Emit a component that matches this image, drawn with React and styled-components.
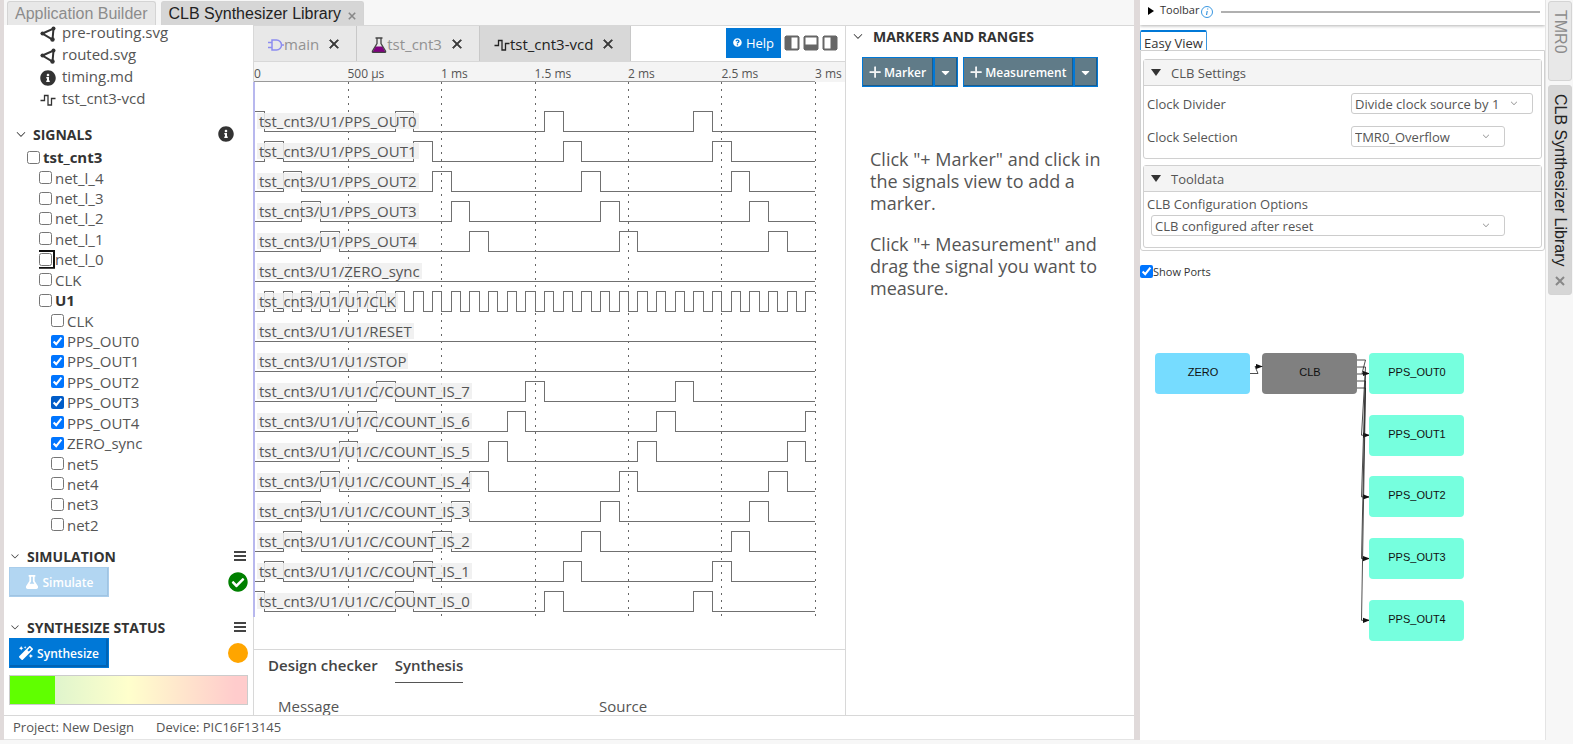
import { useState } from "react";
import styled, { createGlobalStyle, css } from "styled-components";
import {
  FaCaretDown,
  FaCheckCircle,
  FaFlask,
  FaInfoCircle,
  FaMagic,
  FaQuestionCircle,
} from "react-icons/fa";
import {
  VscAdd,
  VscChevronDown,
  VscClose,
  VscLayoutPanel,
  VscLayoutSidebarLeft,
  VscLayoutSidebarRight,
} from "react-icons/vsc";

const GlobalStyle = createGlobalStyle`
  * {
    box-sizing: border-box;
  }
  body {
    margin: 0;
    background: #f7f7f7;
    color: #555;
    font-family: "Open Sans", "Noto Sans", sans-serif;
    font-size: 15px;
  }
  button, select, input {
    font-family: inherit;
    margin: 0;
  }
  h2, p, ul {
    margin: 0;
    padding: 0;
  }
`;

const Page = styled.div`
  display: flex;
  height: 100vh;
  padding-bottom: 4px;
  overflow: hidden;
`;
const Workbench = styled.div`
  display: flex;
  flex-direction: column;
  flex: 1;
  min-width: 0;
  border-left: 4px solid #e0dada;
  border-right: 6px solid #e0dada;
`;
const TopTabs = styled.nav`
  display: flex;
  gap: 5px;
  height: 25px;
  padding: 1px 3px 0;
`;
const TopTab = styled.button`
  display: flex;
  align-items: center;
  gap: 7px;
  padding: 0 7px;
  border: 1px solid #d4d4d4;
  border-bottom: 0;
  border-radius: 3px 3px 0 0;
  background: ${({ $active }) => ($active ? "#d6d6d6" : "#e8e8e8")};
  color: ${({ $active }) => ($active ? "#222" : "#8c8c8c")};
  font-family: "Liberation Sans", Arial, sans-serif;
  font-size: 16px;
  white-space: nowrap;
`;
const TabCross = styled.svg`
  width: ${({ $size }) => $size}px;
  height: ${({ $size }) => $size}px;
  margin-top: ${({ $size }) => ($size === 8 ? 5 : 0)}px;
  stroke: #888;
  stroke-width: 2px;
`;
const Panes = styled.main`
  display: flex;
  flex: 1;
  min-height: 0;
  background: #fff;
`;

/* left pane */
const Sidebar = styled.aside`
  display: flex;
  flex-direction: column;
  width: 250px;
  padding: 0 5px 10px;
  border-right: 1px solid #d8d8d8;
`;
const FileList = styled.ul`
  padding-left: 31px;
  list-style: none;
  margin-top: -4px;
`;
const FileRow = styled.li`
  display: flex;
  align-items: center;
  gap: 6px;
  height: 22px;
  svg {
    width: 16px;
    height: 16px;
    margin-top: 3px;
    color: #333;
  }
`;
const SectionHead = styled.div`
  display: flex;
  align-items: center;
  gap: 6px;
  height: 22px;
  color: #333;
`;
const SignalsHead = styled(SectionHead)`
  gap: 5px;
  margin: 14px 14px 0 5px;
`;
const SectionTitle = styled.h2`
  flex: 1;
  font-size: 14px;
  font-weight: 700;
`;
const Tree = styled.div`
  display: flex;
  flex: 1;
  flex-direction: column;
  margin: 2px 0 10px 16px;
`;
const TreeRow = styled.label`
  display: flex;
  flex: 1;
  align-items: center;
  gap: 3px;
  padding-left: ${({ $depth }) => $depth * 12 + 2}px;
  line-height: 20px;
  font-weight: ${({ $bold }) => ($bold ? 700 : 400)};
  color: ${({ $bold }) => ($bold ? "#333" : "#555")};
`;
const Check = styled.input`
  width: 13px;
  height: 13px;
  accent-color: ${({ $dark }) => ($dark ? "#005cc8" : "#0075ff")};
  ${({ $ring }) =>
    $ring &&
    css`
      border-radius: 3px;
      box-shadow: 0 0 0 1px #fff, 0 0 0 3px #101010;
      clip-path: inset(-3px -3px -3px 0);
    `}
`;
const StatusRow = styled.div`
  display: flex;
  align-items: center;
  justify-content: space-between;
  margin-bottom: ${({ $last }) => ($last ? 7 : 19)}px;
`;
const ActionButton = styled.button`
  display: flex;
  align-items: center;
  justify-content: center;
  gap: 4px;
  height: 30px;
  border: 1px solid #0078d7;
  background: #0078d7;
  color: #fff;
  font-size: 12px;
  font-weight: 600;
`;
const SideButton = styled(ActionButton)`
  width: 100px;
  box-shadow: inset -2px -2px 0 #0063b5;
  svg {
    width: 14px;
    height: 14px;
  }
  &:disabled {
    border-color: #a9cdeb;
    background: #b2d6f2;
    box-shadow: inset -1px -1px 0 #a0c4e2;
  }
`;
const StatusDot = styled.span`
  width: 20px;
  height: 20px;
  border-radius: 50%;
  background: orange;
`;
const Meter = styled.div`
  height: 30px;
  border: 1px solid #ccc;
  background: linear-gradient(90deg, #cec 0%, #ffc 50%, #fcc 95%);
`;
const MeterFill = styled.div`
  height: 100%;
  background: #60ff00;
`;

/* centre pane */
const Center = styled.section`
  display: flex;
  flex: 1;
  flex-direction: column;
  min-width: 0;
  border-right: 1px solid #d8d8d8;
`;
const EditorTabs = styled.div`
  display: flex;
  height: 37px;
  border-bottom: 1px solid #d8d8d8;
  border-top: 1px solid #d8d8d8;
`;
const EditorTab = styled.div`
  display: flex;
  align-items: center;
  padding: 0 14px;
  border-right: 1px solid #c8c8c8;
  background: ${({ $active }) => ($active ? "#d8d8d8" : "#e8e8e8")};
  color: ${({ $active }) => ($active ? "#222" : "#929292")};
  > svg {
    width: 16px;
    height: 16px;
    margin-top: 2px;
  }
`;
const PlainButton = styled.button`
  display: flex;
  padding: 0;
  border: 0;
  background: none;
  color: #666;
`;
const CloseTab = styled(PlainButton)`
  margin-left: 7px;
  color: #333;
  svg {
    width: 16px;
    height: 16px;
    stroke: #333;
    stroke-width: 1px;
  }
`;
const EditorTools = styled.div`
  display: flex;
  align-items: center;
  gap: 3px;
  margin-left: auto;
  padding: 0 7px 2px 0;
`;
const HelpButton = styled(ActionButton)`
  width: 55px;
  font-size: 13px;
  font-weight: 400;
`;
const LayoutButton = styled(PlainButton)`
  svg {
    width: 16px;
    height: 16px;
    stroke: #666;
    stroke-width: 1px;
  }
`;
const Axis = styled.div`
  height: 20px;
  padding-right: 30px;
  background: #f4f4f4;
`;
const Ticks = styled.div`
  display: grid;
  grid-template-columns: repeat(6, 1fr) 0;
  height: 20px;
  border-bottom: 1px solid #999;
  font-size: 12px;
  line-height: 24px;
  white-space: nowrap;
`;
const Plot = styled.div`
  position: relative;
  margin: 0 30px 0 -1px;
  padding: 23px 0 2px;
  border-left: 2px solid #b8b8ee;
`;
const GridLines = styled.svg`
  position: absolute;
  inset: 0;
  width: 100%;
  height: 100%;
  overflow: visible;
`;
const WaveRow = styled.div`
  position: relative;
  height: 30px;
`;
const WaveSvg = styled.svg`
  display: block;
  width: 100%;
  height: 30px;
`;
const WaveLabel = styled.span`
  position: absolute;
  left: 2px;
  top: 8px;
  padding: 0 2px;
  background: rgba(238, 238, 238, 0.85);
  line-height: 16px;
`;
const OutputArea = styled.div`
  display: flex;
  flex: 1;
  min-height: 0;
  padding-top: 32px;
`;
const Output = styled.section`
  flex: 1;
  min-height: 0;
  border-top: 1px solid #d8d8d8;
  overflow: hidden;
`;
const OutputTabs = styled.div`
  display: flex;
  gap: 17px;
  padding: 1px 14px 0;
`;
const OutputTab = styled.button`
  height: 32px;
  padding: 0 0 3px;
  border: 0;
  border-bottom: 1px solid ${({ $active }) => ($active ? "#555" : "transparent")};
  background: none;
  color: #444;
  font-size: 15px;
  font-weight: 600;
`;
const OutputTable = styled.table`
  width: 100%;
  margin-top: 12px;
  border-spacing: 0;
  table-layout: fixed;
  th {
    padding: 0 0 0 24px;
    font-weight: 400;
    line-height: 22px;
    text-align: left;
  }
  th:first-child {
    width: 321px;
  }
`;

/* markers pane */
const Markers = styled.section`
  width: 288px;
  border-top: 1px solid #d8d8d8;
`;
const MarkersHead = styled(SectionHead)`
  height: 20px;
  padding-left: 5px;
  gap: 8px;
`;
const MarkerButtons = styled.div`
  display: flex;
  gap: 5px;
  padding: 11px 16px 0;
`;
const SplitButton = styled.div`
  display: flex;
`;
const SlateButton = styled(ActionButton)`
  width: ${({ $narrow }) => ($narrow ? "24px" : "auto")};
  padding: 0 7px 0 6px;
  gap: 2px;
  background: #607b88;
  box-shadow: inset -1px -1px 0 #1d5c8c;
`;
const Hint = styled.p`
  padding: 0 16px 0 24px;
  margin: ${({ $first }) => ($first ? "61px 0 19px" : "0")};
  font-size: 18px;
  line-height: 22px;
`;
const StatusBar = styled.footer`
  display: flex;
  gap: 22px;
  height: 25px;
  padding-left: 9px;
  border-top: 1px solid #d8d8d8;
  border-bottom: 1px solid #e4e4e4;
  background: #fff;
  font-size: 13px;
  line-height: 23px;
`;

/* right pane */
const EasyPane = styled.aside`
  width: 406px;
  border-right: 1px solid #e4e4e4;
  background: #fff;
`;
const Toolbar = styled.div`
  display: flex;
  align-items: center;
  height: 25px;
  padding: 0 5px 4px 8px;
  box-shadow: 0 1px 3px rgba(0, 0, 0, 0.3);
  color: #333;
  font-size: 11px;
  clip-path: inset(0 0 -4px 0);
`;
const ToolbarName = styled.span`
  margin: 0 2px 2px 6px;
`;
const Rule = styled.hr`
  flex: 1;
  height: 2px;
  margin: 2px 0 0 8px;
  border: 0;
  background: #b0b0b0;
`;
const InfoMark = styled.svg`
  width: 12px;
  height: 12px;
  margin-top: 2px;
`;
const EasyTab = styled.button`
  display: block;
  height: 20px;
  margin-top: 5px;
  padding: 2px 3px 0;
  border: 1px solid #3a97e0;
  border-top: 2px solid #0078d7;
  border-bottom: 0;
  border-radius: 2px 2px 0 0;
  background: #fff;
  color: #333;
  font-size: 13px;
`;
const EasyBody = styled.div`
  display: flex;
  flex-direction: column;
  gap: 6px;
  padding: 8px 2px 2px;
  border: 1px solid #d0d0d0;
  border-radius: 0 0 3px 3px;
`;
const Group = styled.details`
  padding-bottom: 6px;
  border: 1px solid #d0d0d0;
  border-radius: 3px;
  font-size: 13px;
`;
const GroupHead = styled.summary`
  display: flex;
  align-items: center;
  gap: 10px;
  height: 26px;
  padding-left: 7px;
  border-bottom: 1px solid #d0d0d0;
  background: #f4f4f4;
`;
const Field = styled.div`
  display: grid;
  grid-template-columns: 204px auto;
  justify-content: start;
  align-items: center;
  height: 33px;
  padding: 2px 0 0 3px;
  ${({ $stacked }) =>
    $stacked &&
    css`
      grid-template-columns: 1fr;
      align-content: start;
      row-gap: 2px;
      height: 49px;
      padding-top: 3px;
      select {
        margin-left: 4px;
      }
    `}
`;
const SelectBox = styled.span`
  position: relative;
  display: flex;
  width: max-content;
  svg {
    position: absolute;
    top: 5px;
    right: 14px;
    color: #888;
  }
`;
const Select = styled.select`
  width: ${({ $width }) => $width}px;
  height: 21px;
  padding: 0 3px;
  border: 1px solid #ccc;
  border-radius: 3px;
  background: #fff;
  color: #555;
  font-size: 13px;
  appearance: none;
`;
const ShowPorts = styled.label`
  display: flex;
  align-items: flex-end;
  margin-top: 14px;
  color: #333;
  font-size: 11px;
  line-height: 12px;
`;
const Graph = styled.svg`
  display: block;
  margin-top: 70px;
  width: 400px;
  height: 300px;
  text {
    font-family: "Liberation Sans", Arial, sans-serif;
    font-size: 11px;
    text-anchor: middle;
    fill: #111;
  }
`;
const SideTabs = styled.nav`
  display: flex;
  flex-direction: column;
  gap: 4px;
  width: 27px;
  padding: 1px 1px 0 2px;
`;
const SideTab = styled(TopTab)`
  gap: 9px;
  height: ${({ $active }) => ($active ? 210 : 80)}px;
  padding: 8px 2px;
  border: 1px solid #d4d4d4;
  border-radius: 3px;
  writing-mode: vertical-rl;
`;

const HierarchyIcon = () => (
  <svg viewBox="0 0 16 16" fill="none" stroke="currentColor">
    <path d="M2.500 7.500 13.500 2.500 12.500 13.500z" strokeWidth="2" />
    <circle cx="2.500" cy="7.500" r="2" fill="currentColor" stroke="none" />
    <circle cx="13.500" cy="2.500" r="2" fill="currentColor" stroke="none" />
    <circle cx="12.500" cy="13.500" r="2.200" fill="currentColor" stroke="none" />
  </svg>
);
const PulseIcon = () => (
  <svg viewBox="0 0 16 16" fill="none" stroke="currentColor" strokeWidth="1.300">
    <path d="M.5 8.500H4.500V3.500H8V13H11.500V6.500H15.500" />
  </svg>
);
const GateIcon = () => (
  <svg viewBox="0 0 16 16" fill="none" stroke="#8c8cf0" strokeWidth="1.500">
    <path d="M4 3h4.500a5 5 0 0 1 0 10H4zM0 5.500h4M0 10.500h4M13 8h3" />
  </svg>
);
const FlaskIcon = () => (
  <svg viewBox="0 0 16 16">
    <path d="M4.500 9.500h7l3 5.500h-13z" fill="#800080" />
    <path
      d="M4.500 1h7M6 1v5.500L1.500 14q-.5 1.500 1 1.500h11q1.500 0 1-1.500L10 6.500V1"
      fill="none"
      stroke="#444"
      strokeWidth="1.300"
    />
  </svg>
);
const MenuIcon = () => (
  <svg width="14" height="12" stroke="#444" strokeWidth="2">
    <path d="M0 2h12M0 6h12M0 10h12" shapeRendering="crispEdges" />
  </svg>
);
const Cross = ({ size }) => (
  <TabCross viewBox="0 0 10 10" $size={size}>
    <path d="M1 1 9 9M9 1 1 9" />
  </TabCross>
);

const FILES = [
  ["pre-routing.svg", HierarchyIcon],
  ["routed.svg", HierarchyIcon],
  ["timing.md", FaInfoCircle],
  ["tst_cnt3-vcd", PulseIcon],
];

const SIGNALS = [
  { name: "tst_cnt3", depth: 0, bold: true },
  { name: "net_l_4", depth: 1 },
  { name: "net_l_3", depth: 1 },
  { name: "net_l_2", depth: 1 },
  { name: "net_l_1", depth: 1 },
  { name: "net_l_0", depth: 1, ring: true },
  { name: "CLK", depth: 1 },
  { name: "U1", depth: 1, bold: true },
  { name: "CLK", depth: 2 },
  { name: "PPS_OUT0", depth: 2, on: true },
  { name: "PPS_OUT1", depth: 2, on: true },
  { name: "PPS_OUT2", depth: 2, on: true },
  { name: "PPS_OUT3", depth: 2, on: true, dark: true },
  { name: "PPS_OUT4", depth: 2, on: true },
  { name: "ZERO_sync", depth: 2, on: true },
  { name: "net5", depth: 2 },
  { name: "net4", depth: 2 },
  { name: "net3", depth: 2 },
  { name: "net2", depth: 2 },
];

// times are in µs, the view spans 3 ms
const SPAN = 3000;
const TICKS = ["0", "500 µs", "1 ms", "1.5 ms", "2 ms", "2.5 ms", "3 ms"];

const countPulses = (k) => {
  const pulses = [];
  for (let start = k * 100 - 50; start < SPAN; start += 800) {
    pulses.push([Math.max(start, 0), Math.min(start + 100, SPAN)]);
  }
  return pulses;
};
const clockPulses = () => {
  const pulses = [];
  for (let start = 50; start < SPAN; start += 100) {
    pulses.push([start, start + 50]);
  }
  return pulses;
};

const WAVES = [
  ...[0, 1, 2, 3, 4].map((k) => [`tst_cnt3/U1/PPS_OUT${k}`, countPulses(k)]),
  ["tst_cnt3/U1/ZERO_sync", []],
  ["tst_cnt3/U1/U1/CLK", clockPulses()],
  ["tst_cnt3/U1/U1/RESET", []],
  ["tst_cnt3/U1/U1/STOP", []],
  ...[7, 6, 5, 4, 3, 2, 1, 0].map((k) => [
    `tst_cnt3/U1/U1/C/COUNT_IS_${k}`,
    countPulses(k),
  ]),
];

const wavePath = (pulses) => {
  let d = pulses.length && pulses[0][0] === 0 ? "M0 6.500" : "M0 26.500";
  pulses.forEach(([start, end]) => {
    d += start > 0 ? `H${start}V6.500H${end}` : `H${end}`;
    if (end < SPAN || pulses.length > 5) d += "V26.500";
  });
  return d.endsWith("H3000") ? d : `${d}H${SPAN}`;
};

function SignalsPane() {
  const [checked, setChecked] = useState(SIGNALS.map((s) => !!s.on));
  const toggle = (i) =>
    setChecked(checked.map((c, index) => (index === i ? !c : c)));
  return (
    <Sidebar>
      <FileList>
        {FILES.map(([name, Icon]) => (
          <FileRow key={name}>
            <Icon />
            {name}
          </FileRow>
        ))}
      </FileList>
      <SignalsHead>
        <VscChevronDown size={14} />
        <SectionTitle>SIGNALS</SectionTitle>
        <FaInfoCircle size={16} />
      </SignalsHead>
      <Tree>
        {SIGNALS.map((s, i) => (
          <TreeRow key={i} $depth={s.depth} $bold={s.bold}>
            <Check
              type="checkbox"
              checked={checked[i]}
              onChange={() => toggle(i)}
              $dark={s.dark}
              $ring={s.ring}
            />
            {s.name}
          </TreeRow>
        ))}
      </Tree>
      <SectionHead>
        <VscChevronDown size={12} />
        <SectionTitle>SIMULATION</SectionTitle>
        <MenuIcon />
      </SectionHead>
      <StatusRow>
        <SideButton disabled>
          <FaFlask />
          Simulate
        </SideButton>
        <FaCheckCircle size={20} color="green" />
      </StatusRow>
      <SectionHead>
        <VscChevronDown size={12} />
        <SectionTitle>SYNTHESIZE STATUS</SectionTitle>
        <MenuIcon />
      </SectionHead>
      <StatusRow $last>
        <SideButton>
          <FaMagic />
          Synthesize
        </SideButton>
        <StatusDot />
      </StatusRow>
      <Meter>
        <MeterFill style={{ width: "19%" }} />
      </Meter>
    </Sidebar>
  );
}

function Waves() {
  return (
    <>
      <Axis>
        <Ticks>
          {TICKS.map((t) => (
            <span key={t}>{t}</span>
          ))}
        </Ticks>
      </Axis>
      <Plot>
        <GridLines>
          {TICKS.slice(1).map((t, i) => (
            <line
              key={t}
              x1={`${((i + 1) * 100) / 6}%`}
              x2={`${((i + 1) * 100) / 6}%`}
              y1="0"
              y2="100%"
              stroke="#666"
              strokeDasharray="2 5"
              shapeRendering="crispEdges"
            />
          ))}
        </GridLines>
        {WAVES.map(([name, pulses]) => (
          <WaveRow key={name}>
            <WaveSvg viewBox={`0 0 ${SPAN} 30`} preserveAspectRatio="none">
              <path
                d={wavePath(pulses)}
                fill="none"
                stroke="#707070"
                vectorEffect="non-scaling-stroke"
                shapeRendering="crispEdges"
              />
            </WaveSvg>
            <WaveLabel>{name}</WaveLabel>
          </WaveRow>
        ))}
      </Plot>
    </>
  );
}

const EDITORS = [
  ["main", GateIcon],
  ["tst_cnt3", FlaskIcon],
  ["tst_cnt3-vcd", PulseIcon],
];

function Editor() {
  return (
    <Center>
      <EditorTabs>
        {EDITORS.map(([name, Icon], i) => (
          <EditorTab key={name} $active={i === 2}>
            <Icon />
            {name}
            <CloseTab aria-label={`Close ${name}`}>
              <VscClose />
            </CloseTab>
          </EditorTab>
        ))}
        <EditorTools>
          <HelpButton>
            <FaQuestionCircle />
            Help
          </HelpButton>
          <LayoutButton aria-label="Toggle left pane">
            <VscLayoutSidebarLeft />
          </LayoutButton>
          <LayoutButton aria-label="Toggle bottom pane">
            <VscLayoutPanel />
          </LayoutButton>
          <LayoutButton aria-label="Toggle right pane">
            <VscLayoutSidebarRight />
          </LayoutButton>
        </EditorTools>
      </EditorTabs>
      <Waves />
      <OutputArea>
        <Output>
          <OutputTabs>
            <OutputTab>Design checker</OutputTab>
            <OutputTab $active>Synthesis</OutputTab>
          </OutputTabs>
          <OutputTable>
            <thead>
              <tr>
                <th>Message</th>
                <th>Source</th>
              </tr>
            </thead>
          </OutputTable>
        </Output>
      </OutputArea>
    </Center>
  );
}

function MarkersPane() {
  return (
    <Markers>
      <MarkersHead>
        <VscChevronDown size={14} />
        <SectionTitle>MARKERS AND RANGES</SectionTitle>
      </MarkersHead>
      <MarkerButtons>
        {["Marker", "Measurement"].map((name) => (
          <SplitButton key={name}>
            <SlateButton>
              <VscAdd size={13} stroke="#fff" strokeWidth={1} />
              {name}
            </SlateButton>
            <SlateButton $narrow aria-label={`${name} options`}>
              <FaCaretDown size={13} />
            </SlateButton>
          </SplitButton>
        ))}
      </MarkerButtons>
      <Hint $first>
        Click "+ Marker" and click in the signals view to add a marker.
      </Hint>
      <Hint>
        Click "+ Measurement" and drag the signal you want to measure.
      </Hint>
    </Markers>
  );
}

function Option({ id, label, value, width, stacked }) {
  return (
    <Field $stacked={stacked}>
      <label htmlFor={id}>{label}</label>
      <SelectBox>
        <Select id={id} $width={width}>
          <option>{value}</option>
        </Select>
        <VscChevronDown size={10} />
      </SelectBox>
    </Field>
  );
}

const Triangle = () => (
  <svg width="10" height="7">
    <path d="M0 0h10L5 7z" fill="#333" />
  </svg>
);

const OUTPUTS = [0, 1, 2, 3, 4];

function PortGraph() {
  return (
    <Graph viewBox="0 0 400 300">
      <defs>
        <marker
          id="arrow"
          viewBox="0 0 8 6"
          refX="7"
          refY="3"
          markerWidth="7"
          markerHeight="6"
          markerUnits="userSpaceOnUse"
          orient="auto"
        >
          <path d="M0 0 8 3 0 6z" fill="#111" />
        </marker>
      </defs>
      <rect x="15" y="5" width="95" height="41" rx="4" fill="#76dcff" />
      <text x="63" y="28">
        ZERO
      </text>
      <rect x="122" y="5" width="95" height="41" rx="4" fill="#808080" />
      <text x="170" y="28">
        CLB
      </text>
      <g fill="none" stroke="#222" strokeWidth="0.800">
        <path d="M110 25.500H118L115 18.500H122" markerEnd="url(#arrow)" />
        {OUTPUTS.map((i) => (
          <path
            key={i}
            d={`M217 ${12 + i * 7}H225.5L${i ? 221.5 : 222} ${25.5 + i * 61.7}H229`}
            markerEnd="url(#arrow)"
          />
        ))}
      </g>
      {OUTPUTS.map((i) => (
        <g key={i} transform={`translate(229 ${5 + Math.round(i * 61.7)})`}>
          <rect width="95" height="41" rx="4" fill="#76ffde" />
          <text x="48" y="23">
            PPS_OUT{i}
          </text>
        </g>
      ))}
    </Graph>
  );
}

function EasyView() {
  const [ports, setPorts] = useState(true);
  return (
    <EasyPane>
      <Toolbar>
        <svg width="6" height="8">
          <path d="M0 0 6 4 0 8z" fill="#000" />
        </svg>
        <ToolbarName>Toolbar</ToolbarName>
        <InfoMark viewBox="0 0 12 12" fill="none" stroke="#3a97e0">
          <circle cx="6" cy="6" r="5.500" />
          <path d="M6.700 2.500v1M6.200 5 5.500 9" strokeWidth="1.200" />
        </InfoMark>
        <Rule />
      </Toolbar>
      <EasyTab>Easy View</EasyTab>
      <EasyBody>
        <Group open>
          <GroupHead>
            <Triangle />
            CLB Settings
          </GroupHead>
          <Option
            id="divider"
            label="Clock Divider"
            value="Divide clock source by 1"
            width={182}
          />
          <Option
            id="selection"
            label="Clock Selection"
            value="TMR0_Overflow"
            width={154}
          />
        </Group>
        <Group open>
          <GroupHead>
            <Triangle />
            Tooldata
          </GroupHead>
          <Option
            id="config"
            label="CLB Configuration Options"
            value="CLB configured after reset"
            width={354}
            stacked
          />
        </Group>
      </EasyBody>
      <ShowPorts>
        <Check
          type="checkbox"
          checked={ports}
          onChange={() => setPorts(!ports)}
        />
        Show Ports
      </ShowPorts>
      {ports && <PortGraph />}
    </EasyPane>
  );
}

export default function App() {
  return (
    <>
      <GlobalStyle />
      <Page>
        <Workbench>
          <TopTabs>
            <TopTab>Application Builder</TopTab>
            <TopTab $active>
              CLB Synthesizer Library
              <Cross size={8} />
            </TopTab>
          </TopTabs>
          <Panes>
            <SignalsPane />
            <Editor />
            <MarkersPane />
          </Panes>
          <StatusBar>
            <span>Project: New Design</span>
            <span>Device: PIC16F13145</span>
          </StatusBar>
        </Workbench>
        <EasyView />
        <SideTabs>
          <SideTab>TMR0</SideTab>
          <SideTab $active>
            CLB Synthesizer Library
            <Cross size={10} />
          </SideTab>
        </SideTabs>
      </Page>
    </>
  );
}
